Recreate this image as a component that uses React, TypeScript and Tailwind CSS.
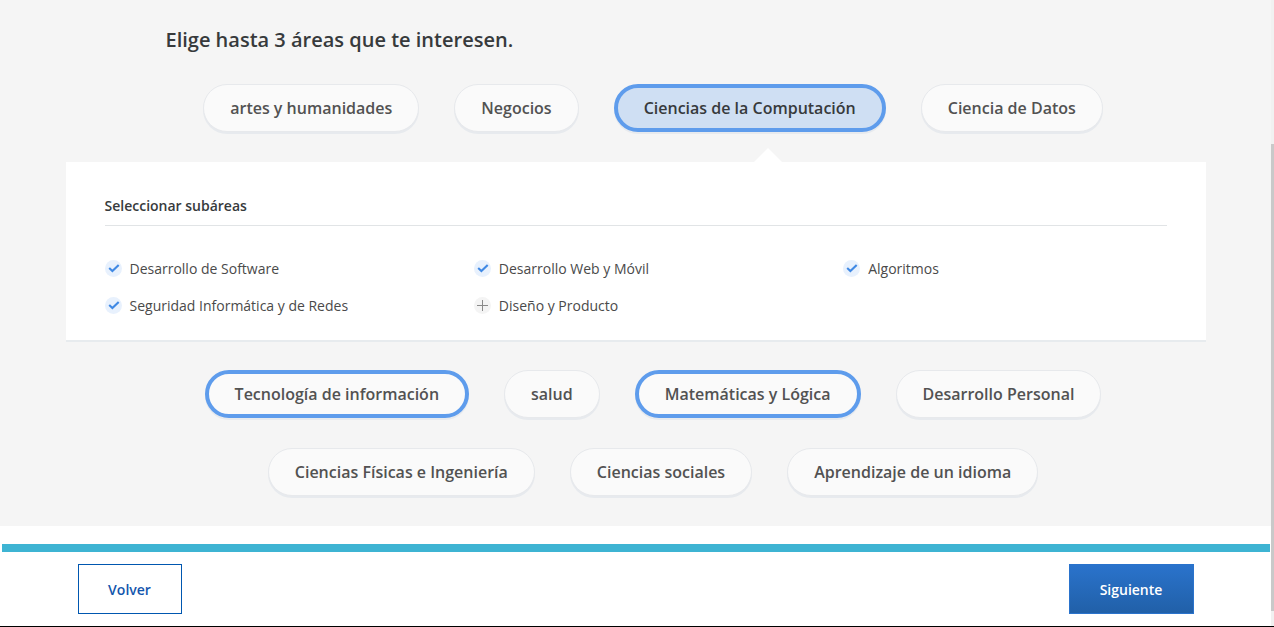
import { useState } from "react";

type Area = { name: string; state?: "chosen" | "open" };

const areasBefore: Area[] = [
  { name: "artes y humanidades" },
  { name: "Negocios" },
  { name: "Ciencias de la Computación", state: "open" },
  { name: "Ciencia de Datos" },
];

const areasAfter: Area[] = [
  { name: "Tecnología de información", state: "chosen" },
  { name: "salud" },
  { name: "Matemáticas y Lógica", state: "chosen" },
  { name: "Desarrollo Personal" },
  { name: "Ciencias Físicas e Ingeniería" },
  { name: "Ciencias sociales" },
  { name: "Aprendizaje de un idioma" },
];

const subareas = [
  { name: "Desarrollo de Software", checked: true },
  { name: "Desarrollo Web y Móvil", checked: true },
  { name: "Algoritmos", checked: true },
  { name: "Seguridad Informática y de Redes", checked: true },
  { name: "Diseño y Producto", checked: false },
];

const pillStyles = {
  plain: "border border-[#e7e9ec] bg-[#fafafa] text-[#525252]",
  chosen: "border-4 border-[#5e9cec] bg-[#fafafa] text-[#525252]",
  open: "border-4 border-[#5e9cec] bg-[#cfdff3] text-[#373a3c]",
};

function AreaPill({ area }: { area: Area }) {
  return (
    <button
      type="button"
      aria-pressed={Boolean(area.state)}
      className={`relative flex h-12 items-center rounded-full px-[26px] text-base font-semibold shadow-[0_2px_0_#e7eaee] ${pillStyles[area.state ?? "plain"]}`}
    >
      {area.name}
      {area.state === "open" && (
        <svg
          className="absolute top-[60px] left-1/2 ml-1 h-[14px] w-7"
          viewBox="0 0 28 14"
          aria-hidden="true"
        >
          <path d="M14 0L28 14H0Z" fill="#fff" />
        </svg>
      )}
    </button>
  );
}

function AreaGroup({ areas }: { areas: Area[] }) {
  return (
    <div className="mx-auto flex max-w-[975px] flex-wrap justify-center gap-x-[35px] gap-y-[30px] pl-[35px]">
      {areas.map((area) => (
        <AreaPill key={area.name} area={area} />
      ))}
    </div>
  );
}

function Subarea({ name, initial }: { name: string; initial: boolean }) {
  const [checked, setChecked] = useState(initial);
  return (
    <label className="flex items-start gap-2 text-sm leading-5 text-[#4a4a4a]">
      <input
        type="checkbox"
        className="sr-only"
        checked={checked}
        onChange={(e) => setChecked(e.target.checked)}
      />
      <svg className="mt-px size-[17px] shrink-0" viewBox="0 0 17 17" aria-hidden="true">
        <circle cx="8.5" cy="8.5" r="8.5" fill={checked ? "#e8f1fd" : "#f4f4f4"} />
        {checked ? (
          <path d="M4.2 8L7.4 11L13.7 4.9" fill="none" stroke="#4089e4" strokeWidth="2.1" />
        ) : (
          <path d="M3 8.5H14M8.5 3V14" fill="none" stroke="#8a8a8a" strokeWidth="1" />
        )}
      </svg>
      {name}
    </label>
  );
}

export default function App() {
  return (
    <div className="flex min-h-screen bg-white font-['Open_Sans','Noto_Sans',sans-serif]">
      <div className="flex min-w-0 grow flex-col">
        <main className="bg-[#f5f5f5] pb-[30px]">
          <h1 className="mx-auto max-w-[940px] pt-6 text-xl leading-8 font-semibold text-[#373a3c]">
            Elige hasta 3 áreas que te interesen.
          </h1>
          <div className="pt-7">
            <AreaGroup areas={areasBefore} />
          </div>
          <section className="mx-auto my-[30px] max-w-[1140px] bg-white px-[39px] pt-[33px] pb-6 shadow-[0_2px_0_#e7ebee]">
            <h2 className="border-b border-[#e1e4e6] pb-[9px] text-sm leading-[21px] font-semibold text-[#373a3c]">
              Seleccionar subáreas
            </h2>
            <div className="grid grid-cols-3 gap-x-[46px] gap-y-[17px] pt-[33px]">
              {subareas.map((s) => (
                <Subarea key={s.name} name={s.name} initial={s.checked} />
              ))}
            </div>
          </section>
          <AreaGroup areas={areasAfter} />
        </main>
        <footer className="grow border-b border-black pt-[18px]">
          <div className="mr-px ml-0.5 h-2 bg-[#3eb4d3]" />
          <div className="mx-auto flex max-w-[1116px] justify-between pt-3 pb-3">
            <button
              type="button"
              className="h-[50px] w-[104px] border border-[#0057b0] bg-white pt-0.5 text-sm font-semibold text-[#1356ad]"
            >
              Volver
            </button>
            <button
              type="button"
              className="h-[50px] w-[125px] border border-[#2a73cc] bg-linear-to-b from-[#2a73cc] to-[#2160a8] pt-0.5 text-sm font-semibold text-white"
            >
              Siguiente
            </button>
          </div>
        </footer>
      </div>
      <div className="flex w-[3px] shrink-0 flex-col border-b border-black bg-[#f1f1f1] pt-36 pb-[15px]" aria-hidden="true">
        <div className="grow bg-[#c9c9c9]" />
      </div>
    </div>
  );
}
